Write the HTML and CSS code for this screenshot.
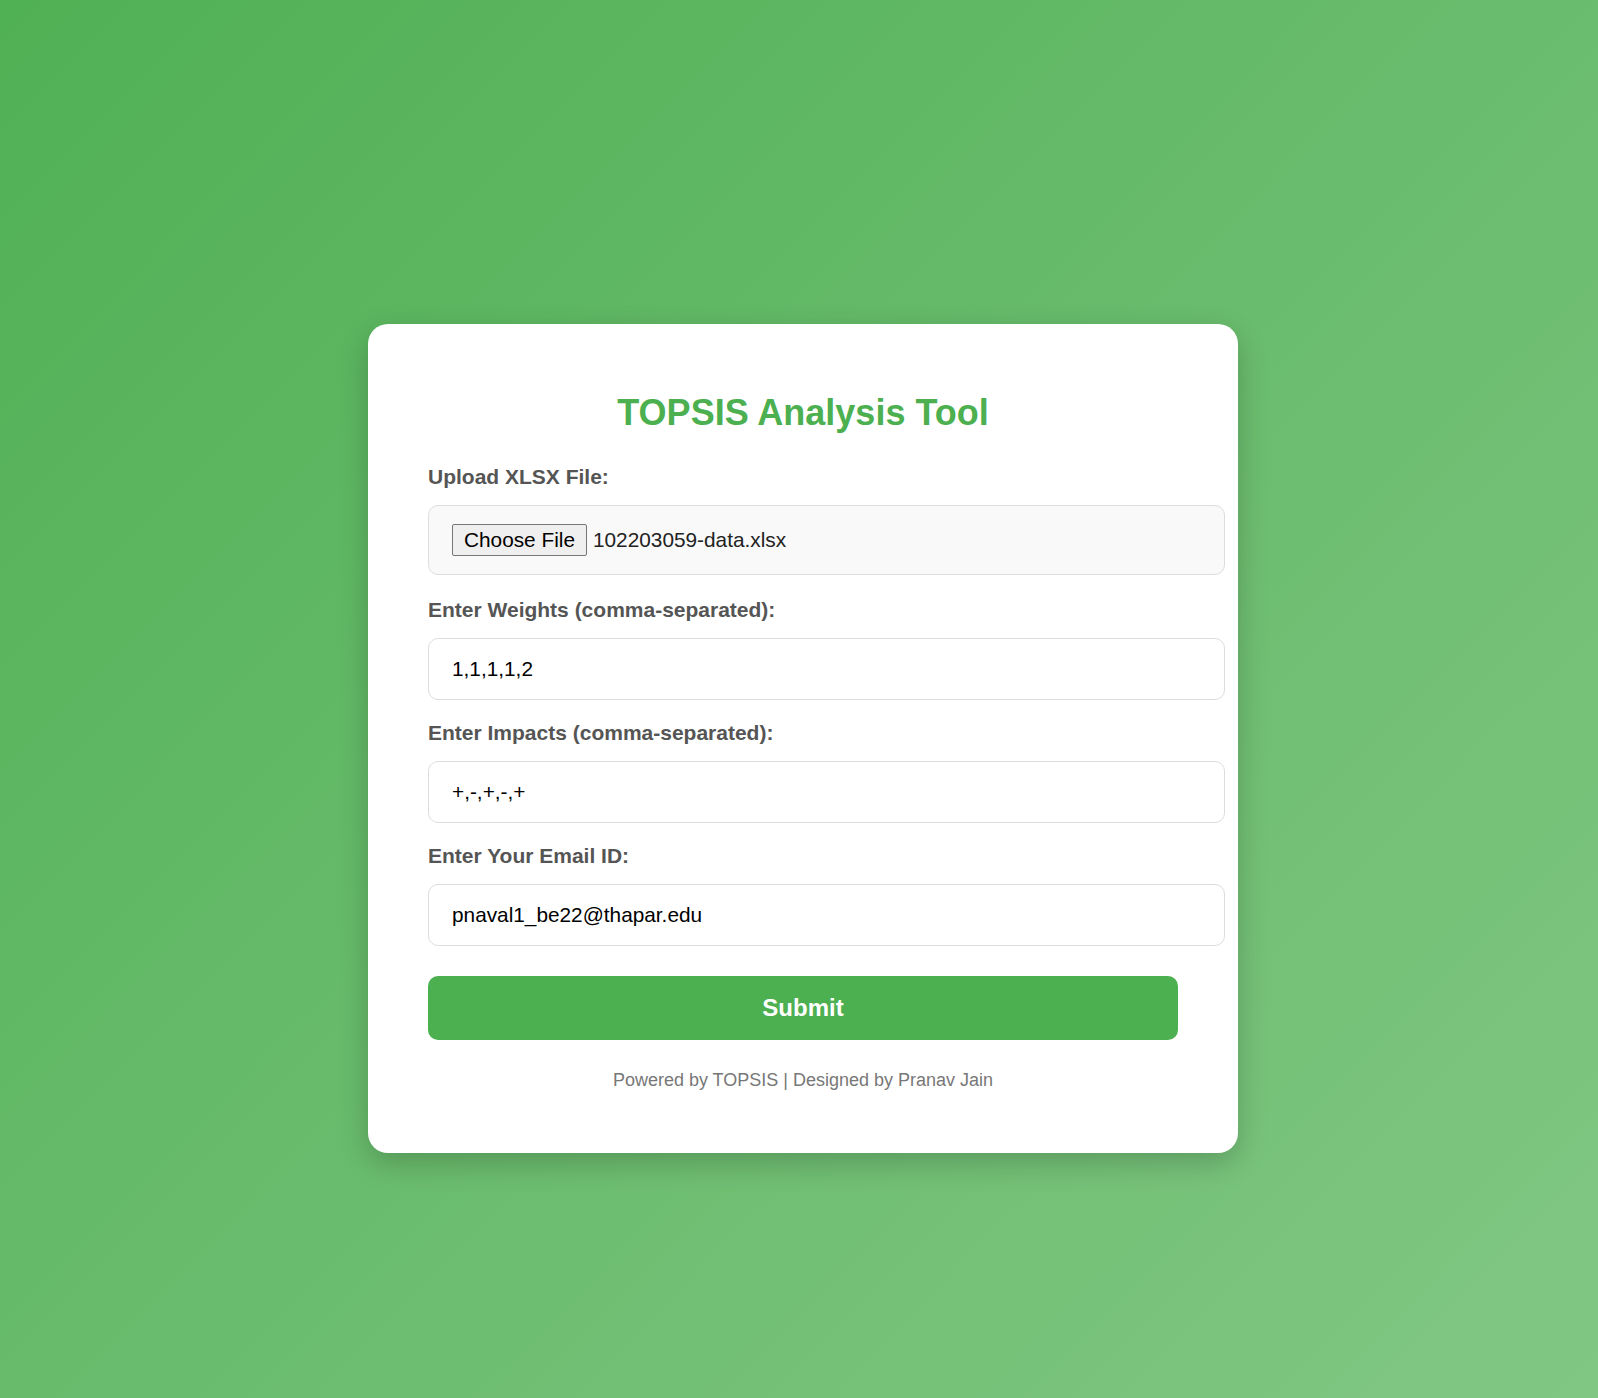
FILE: index.html
```html
<!DOCTYPE html>
<html lang="en">
<head>
<meta charset="UTF-8">
<title>TOPSIS Analysis Tool</title>
<link rel="stylesheet" href="styles.css">
</head>
<body>
  <div class="card">
    <h1 class="title">TOPSIS Analysis Tool</h1>
    <form class="form">
      <label class="label">Upload XLSX File:</label>
      <div class="file-box">
        <span class="file-btn">Choose File</span>
        <span class="file-name">102203059-data.xlsx</span>
      </div>

      <label class="label">Enter Weights (comma-separated):</label>
      <input class="field" type="text" value="1,1,1,1,2">

      <label class="label">Enter Impacts (comma-separated):</label>
      <input class="field" type="text" value="+,-,+,-,+">

      <label class="label">Enter Your Email ID:</label>
      <input class="field field-last" type="text" value="pnaval1_be22@thapar.edu">

      <button class="submit" type="button">Submit</button>
    </form>
    <p class="footer">Powered by TOPSIS | Designed by Pranav Jain</p>
  </div>
</body>
</html>
```

FILE: styles.css
```css
* {
  box-sizing: border-box;
}

html, body {
  margin: 0;
}

body {
  min-height: 100vh;
  padding: 79px 0 0 8px;
  display: flex;
  align-items: center;
  justify-content: center;
  background: linear-gradient(135deg, #50b054, #81c784);
  font-family: "Liberation Sans", Arial, sans-serif;
}

.card {
  width: 870px;
  padding: 60px 60px 62px;
  background: #ffffff;
  border-radius: 20px;
  box-shadow: 0 10px 30px rgba(0, 0, 0, 0.2);
}

.title {
  margin: 8.5px 0 30.5px;
  font-size: 36px;
  font-weight: bold;
  line-height: normal;
  color: #4caf50;
  text-align: center;
}

.form {
  display: flex;
  flex-direction: column;
  margin: 0;
}

.label {
  display: block;
  font-size: 21px;
  font-weight: bold;
  line-height: normal;
  color: #555555;
  margin-bottom: 16.3px;
}

.file-box {
  width: 797px;
  height: 70px;
  border: 1px solid #dddddd;
  border-radius: 10px;
  background: #f9f9f9;
  padding-left: 23px;
  display: flex;
  align-items: center;
  margin-bottom: 23.2px;
}

.file-btn {
  height: 32px;
  padding: 0 11px;
  display: flex;
  align-items: center;
  border: 1px solid #767676;
  border-radius: 2px;
  background: #efefef;
  font-size: 20.8px;
  color: #000000;
}

.file-name {
  margin-left: 6px;
  font-size: 20.8px;
  color: #222222;
}

.field {
  width: 797px;
  height: 61.6px;
  padding: 0 23px;
  border: 1px solid #dddddd;
  border-radius: 10px;
  background: #ffffff;
  font-family: "Liberation Sans", Arial, sans-serif;
  font-size: 20.8px;
  color: #000000;
  margin: 0 0 21px;
  outline: none;
}

.field-last {
  margin-bottom: 30px;
}

.submit {
  width: 100%;
  height: 64.5px;
  border: none;
  border-radius: 10px;
  background: #4caf50;
  color: #ffffff;
  font-family: "Liberation Sans", Arial, sans-serif;
  font-size: 24px;
  font-weight: bold;
  margin: 0;
}

.footer {
  margin: 30px 0 0;
  font-size: 18px;
  line-height: normal;
  color: #777777;
  text-align: center;
}
```
